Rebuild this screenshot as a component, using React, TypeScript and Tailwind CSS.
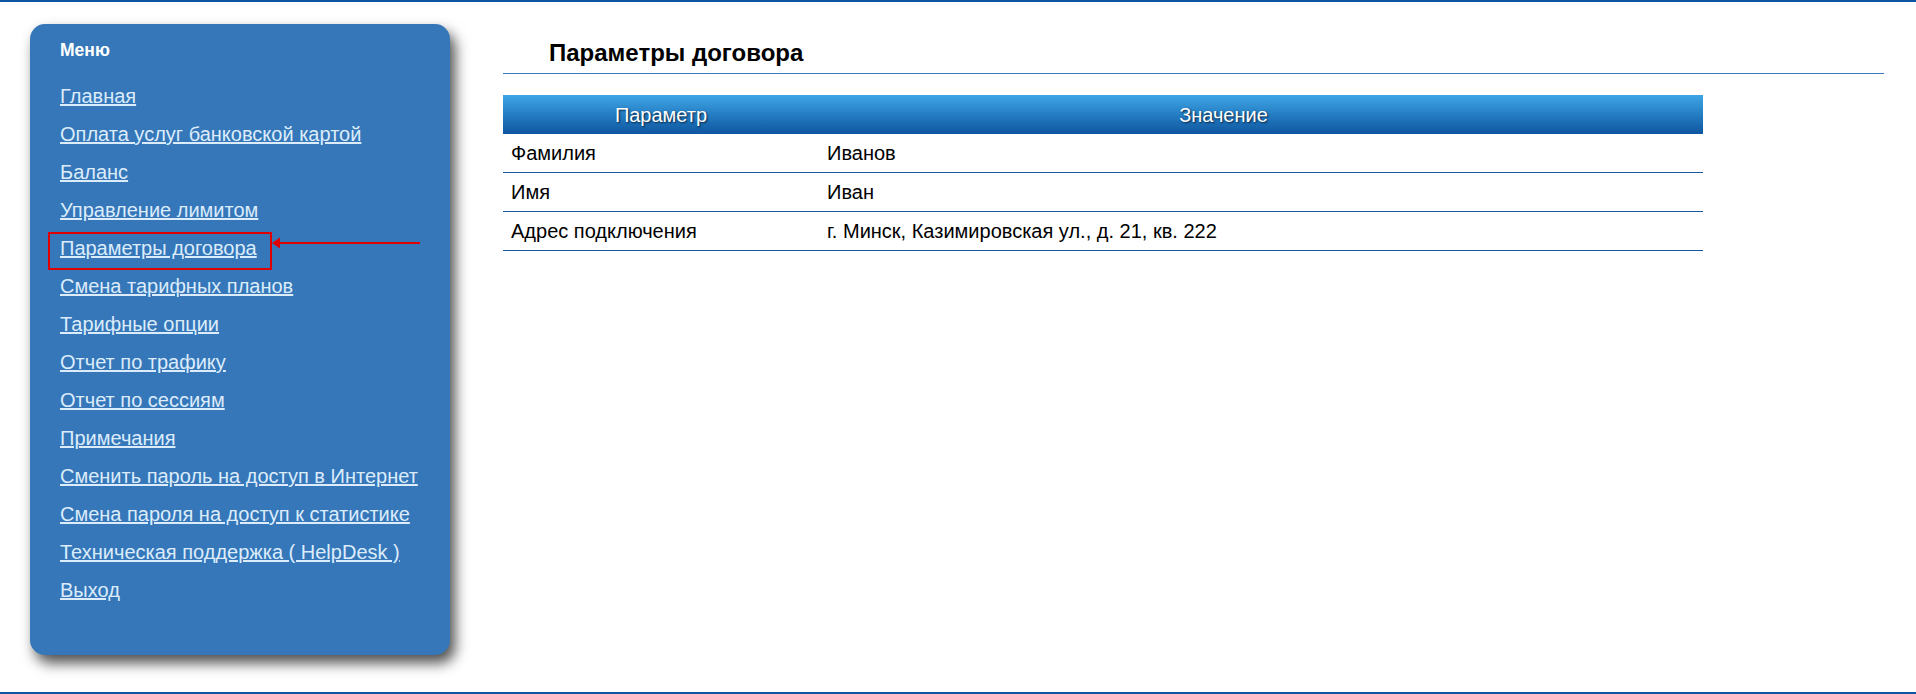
const menu = [
  "Главная",
  "Оплата услуг банковской картой",
  "Баланс",
  "Управление лимитом",
  "Параметры договора",
  "Смена тарифных планов",
  "Тарифные опции",
  "Отчет по трафику",
  "Отчет по сессиям",
  "Примечания",
  "Сменить пароль на доступ в Интернет",
  "Смена пароля на доступ к статистике",
  "Техническая поддержка ( HelpDesk )",
  "Выход",
];

const rows = [
  ["Фамилия", "Иванов"],
  ["Имя", "Иван"],
  ["Адрес подключения", "г. Минск, Казимировская ул., д. 21, кв. 222"],
];

export default function App() {
  return (
    <div className="w-[1916px] h-[694px] bg-white border-t-2 border-b-2 border-[#0d55a0] font-['Liberation_Sans',Arial,sans-serif] flex overflow-hidden">
      {/* left menu */}
      <div className="ml-[30px] mt-[22px] w-[420px] h-[631px] rounded-[15px] bg-[#3577b9] shadow-[5px_8px_14px_rgba(0,0,0,0.7)] pl-[30px] pt-[16px] shrink-0">
        <div className="text-white font-bold text-[17.5px] leading-[20px]">Меню</div>
        <ul className="mt-[17px] flex flex-col">
          {menu.map((m) => (
            <li key={m} className="relative h-[38px] leading-[38px] text-[20px]">
              <a href="#" className="text-[#dcecfb] underline">
                {m}
              </a>
              {m === "Параметры договора" && (
                <>
                  <div className="absolute left-[-12px] top-[3px] w-[224px] h-[38px] border-2 border-[#e00000]" />
                  <div className="absolute left-[212px] top-[8px] w-[150px] h-[12px] flex items-center">
                    <svg width="150" height="12" viewBox="0 0 150 12">
                      <polygon points="0,6 8,0.5 8,11.5" fill="#e00000" />
                      <rect x="7" y="5" width="141" height="2" fill="#e00000" />
                    </svg>
                  </div>
                </>
              )}
            </li>
          ))}
        </ul>
      </div>

      {/* content */}
      <div className="ml-[53px] pt-[31px] w-[1381px]">
        <h1 className="pl-[46px] text-[24px] leading-[40px] font-bold text-black border-b border-[#3c7ac0]">
          Параметры договора
        </h1>
        <div className="mt-[21px] w-[1200px]">
          <div className="grid grid-cols-[316px_1fr] h-[39px] bg-gradient-to-b from-[#3ea6e6] to-[#0e56a0] text-white text-[20px] items-center [text-shadow:1px_1px_2px_#07203f]">
            <div className="text-center">Параметр</div>
            <div className="text-center pr-[75px]">Значение</div>
          </div>
          {rows.map(([k, v]) => (
            <div key={k} className="grid grid-cols-[316px_1fr] h-[39px] items-center border-b border-[#1558a2] text-[20px] text-black">
              <div className="pl-[8px]">{k}</div>
              <div className="pl-[8px]">{v}</div>
            </div>
          ))}
        </div>
      </div>
    </div>
  );
}
